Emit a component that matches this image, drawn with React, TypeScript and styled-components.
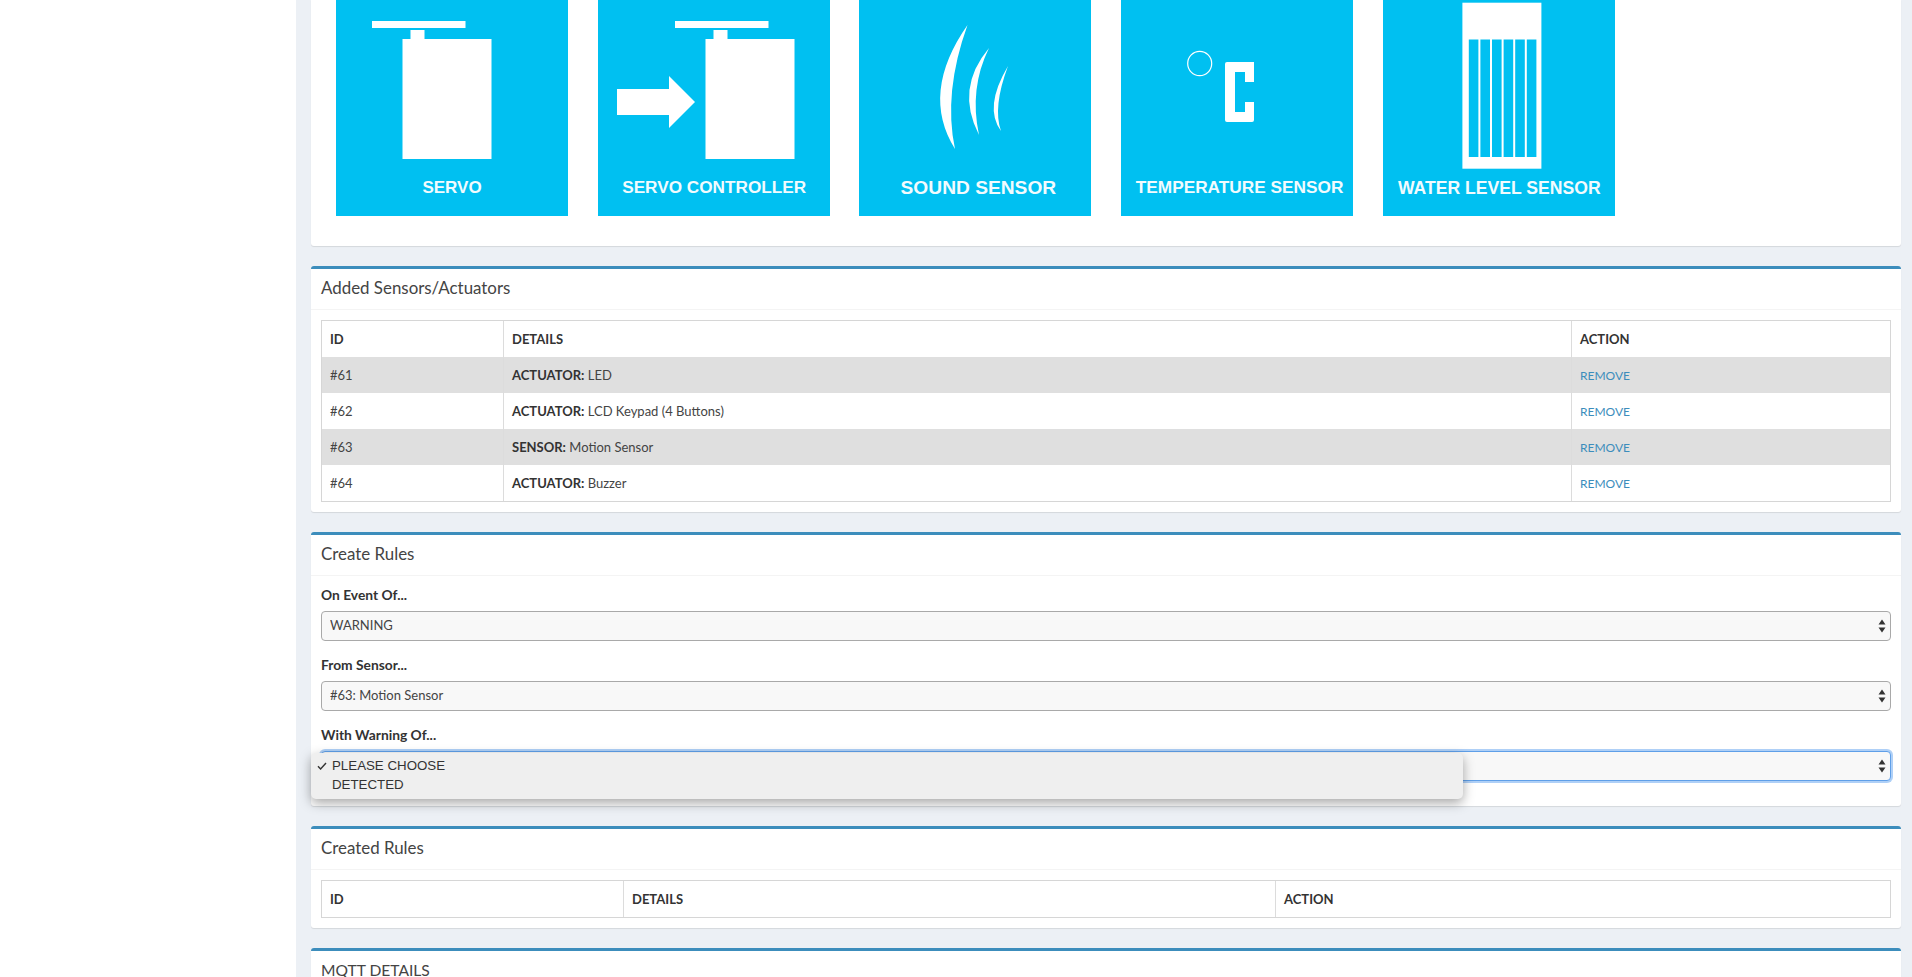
import React from "react";
import styled, { createGlobalStyle } from "styled-components";

const FONT = `Lato, "Noto Sans", sans-serif`;

const GlobalStyle = createGlobalStyle`
  html, body {
    margin: 0;
    height: 977px;
    overflow: hidden;
    background: #fff;
  }
  * {
    box-sizing: border-box;
  }
`;

function ServoBody({ x }: { x: number }) {
  return (
    <>
      <rect x={x} y="21" width="93.5" height="7" />
      <rect x={x + 38.5} y="30" width="14" height="10" />
      <rect x={x + 30.5} y="39" width="89" height="120" />
    </>
  );
}

function ServoArt() {
  return (
    <TileArt viewBox="0 0 232 172">
      <ServoBody x={36} />
    </TileArt>
  );
}

function ServoControllerArt() {
  return (
    <TileArt viewBox="0 0 232 172">
      <ServoBody x={77} />
      <polygon points="19,89 71,89 71,76 97,102 71,128 71,115 19,115" />
    </TileArt>
  );
}

function SoundArt() {
  return (
    <TileArt viewBox="0 0 232 172">
      <path d="M108.5 25 Q61 93 96 149 Q84 93 108.5 25Z" />
      <path d="M130 48 Q96 88.5 120 135 Q110 88.5 130 48Z" />
      <path d="M149 66 Q124.5 107.5 142 131 Q133.5 107.5 149 66Z" />
    </TileArt>
  );
}

function TemperatureArt() {
  return (
    <TileArt viewBox="0 0 232 172">
      <ellipse cx="78.7" cy="63.5" rx="12" ry="12.2" fill="none" stroke="#fff" strokeWidth="1.2" />
      <path d="M106 62 H133 V82 H124 V72 H114 V112 H124 V102 H133 V120 Q133 122 131 122 H106 Q104 122 104 120 V64 Q104 62 106 62Z" />
    </TileArt>
  );
}

function WaterArt() {
  const slots = [0, 1, 2, 3, 4, 5];
  return (
    <TileArt viewBox="0 0 232 172">
      <rect x="79.4" y="2.7" width="79" height="166" />
      {slots.map(i => (
        <rect key={i} x={85.8 + i * 11.6} y="39.5" width="9.6" height="117.5" fill="#00c0f1" />
      ))}
    </TileArt>
  );
}

const TILES = [
  { label: "SERVO", art: <ServoArt />, size: 17, shift: 0, drop: 0 },
  { label: "SERVO CONTROLLER", art: <ServoControllerArt />, size: 17.2, shift: 1, drop: 0 },
  { label: "SOUND SENSOR", art: <SoundArt />, size: 19.2, shift: 6, drop: 0 },
  { label: "TEMPERATURE SENSOR", art: <TemperatureArt />, size: 17.25, shift: 5, drop: 0 },
  { label: "WATER LEVEL SENSOR", art: <WaterArt />, size: 17.6, shift: 1, drop: 1 },
];

const DEVICES = [
  { id: "#61", kind: "ACTUATOR:", name: "LED" },
  { id: "#62", kind: "ACTUATOR:", name: "LCD Keypad (4 Buttons)" },
  { id: "#63", kind: "SENSOR:", name: "Motion Sensor" },
  { id: "#64", kind: "ACTUATOR:", name: "Buzzer" },
];

function SelectArrows() {
  return (
    <ArrowIcon viewBox="0 0 8 14" width="8" height="14">
      <path d="M4 0.5 L7.5 5.5 H0.5Z" />
      <path d="M4 13.5 L0.5 8.5 H7.5Z" />
    </ArrowIcon>
  );
}

interface RuleSelectProps {
  readonly value: string;
  readonly focused?: boolean;
}
function RuleSelect({ value, focused }: RuleSelectProps) {
  return (
    <SelectWrap>
      <Select value={value} $focused={focused} onChange={() => undefined}>
        <option value={value}>{value}</option>
      </Select>
      <SelectArrows />
    </SelectWrap>
  );
}

export default function App() {
  return (
    <Page>
      <GlobalStyle />
      <Sidebar />
      <Content>
        <GalleryBox>
          <TileRow>
            {TILES.map(tile => (
              <Tile key={tile.label}>
                {tile.art}
                <TileLabel $size={tile.size} $shift={tile.shift} $drop={tile.drop}>
                  {tile.label}
                </TileLabel>
              </Tile>
            ))}
          </TileRow>
        </GalleryBox>

        <Box>
          <BoxHeader>Added Sensors/Actuators</BoxHeader>
          <BoxBody>
            <Table>
              <colgroup>
                <col style={{ width: 181 }} />
                <col />
                <col style={{ width: 319 }} />
              </colgroup>
              <thead>
                <tr>
                  <Th>ID</Th>
                  <Th>DETAILS</Th>
                  <Th>ACTION</Th>
                </tr>
              </thead>
              <tbody>
                {DEVICES.map((device, i) => (
                  <Row key={device.id} $striped={i % 2 === 0}>
                    <Td>{device.id}</Td>
                    <Td>
                      <strong>{device.kind}</strong> {device.name}
                    </Td>
                    <Td>
                      <RemoveLink href="#">REMOVE</RemoveLink>
                    </Td>
                  </Row>
                ))}
              </tbody>
            </Table>
          </BoxBody>
        </Box>

        <Box>
          <BoxHeader>Create Rules</BoxHeader>
          <BoxBody>
            <FormGroup>
              <Label>On Event Of...</Label>
              <RuleSelect value="WARNING" />
            </FormGroup>
            <FormGroup>
              <Label>From Sensor...</Label>
              <RuleSelect value="#63: Motion Sensor" />
            </FormGroup>
            <FormGroup>
              <Label>With Warning Of...</Label>
              <RuleSelect value="PLEASE CHOOSE" focused />
              <Menu>
                <MenuItem>
                  <CheckIcon viewBox="0 0 10 8" width="10" height="8">
                    <path d="M1 4.2 L3.6 7 L9 1" />
                  </CheckIcon>
                  PLEASE CHOOSE
                </MenuItem>
                <MenuItem>DETECTED</MenuItem>
              </Menu>
            </FormGroup>
          </BoxBody>
        </Box>

        <Box>
          <BoxHeader>Created Rules</BoxHeader>
          <BoxBody>
            <Table>
              <colgroup>
                <col style={{ width: 301 }} />
                <col style={{ width: 652 }} />
                <col />
              </colgroup>
              <thead>
                <tr>
                  <Th>ID</Th>
                  <Th>DETAILS</Th>
                  <Th>ACTION</Th>
                </tr>
              </thead>
            </Table>
          </BoxBody>
        </Box>

        <Box>
          <CapsHeader>MQTT DETAILS</CapsHeader>
        </Box>
      </Content>
    </Page>
  );
}

const Page = styled.div`
  display: flex;
  height: 977px;
  overflow: hidden;
  font-family: ${FONT};
  font-size: 13px;
  line-height: 20px;
  color: #333;
`;

const Sidebar = styled.div`
  width: 296px;
  flex: none;
  background: #fff;
`;

const Content = styled.div`
  flex: 1;
  min-width: 0;
  padding: 0 11px 0 15px;
  background: #ecf0f5;
`;

const Box = styled.section`
  background: #fff;
  border-top: 3px solid #3c8dbc;
  border-radius: 3px;
  box-shadow: 0 1px 1px rgba(0, 0, 0, 0.1);
  margin-bottom: 20px;
`;

const GalleryBox = styled.section`
  height: 246px;
  margin-bottom: 20px;
  padding-left: 25px;
  background: #fff;
  border-radius: 0 0 3px 3px;
  box-shadow: 0 1px 1px rgba(0, 0, 0, 0.1);
`;

const TileRow = styled.div`
  display: flex;
  gap: 29.7px;
`;

const Tile = styled.div`
  display: flex;
  flex-direction: column;
  width: 232px;
  height: 216px;
  background: #00c0f1;
`;

const TileArt = styled.svg`
  display: block;
  width: 232px;
  height: 172px;
  fill: #fff;
`;

interface TileLabelProps {
  readonly $size: number;
  readonly $shift: number;
  readonly $drop: number;
}
const TileLabel = styled.div<TileLabelProps>`
  height: 32px;
  padding-left: ${({ $shift }) => $shift}px;
  padding-top: ${({ $drop }) => $drop}px;
  font-family: "Liberation Sans", Arial, sans-serif;
  font-weight: 700;
  font-size: ${({ $size }) => $size}px;
  line-height: 31px;
  color: #f2fbfe;
  text-align: center;
  white-space: nowrap;
`;

const BoxHeader = styled.h3`
  margin: 0;
  height: 41px;
  padding: 0 10px;
  border-bottom: 1px solid #f4f4f4;
  font-size: 16.9px;
  font-weight: 400;
  line-height: 38px;
  color: #444;
`;

const CapsHeader = styled(BoxHeader)`
  font-size: 15.6px;
`;

const BoxBody = styled.div`
  padding: 10px;
`;

const Table = styled.table`
  width: 100%;
  table-layout: fixed;
  border-collapse: separate;
  border-spacing: 0;
  border: 1px solid #d6d6d6;
`;

const Th = styled.th`
  height: 36px;
  padding: 0 8px;
  text-align: left;
  font-size: 13px;
  font-weight: 700;
  color: #333;
  & + & {
    border-left: 1px solid #dcdcdc;
  }
`;

interface RowProps {
  readonly $striped: boolean;
}
const Row = styled.tr<RowProps>`
  background: ${({ $striped }) => ($striped ? "#dfdfdf" : "#fff")};
`;

const Td = styled.td`
  height: 36px;
  padding: 0 8px;
  color: #444;
  & + & {
    border-left: 1px solid #dcdcdc;
  }
  strong {
    font-weight: 700;
    color: #333;
  }
`;

const RemoveLink = styled.a`
  font-size: 12px;
  color: #3c8dbc;
  text-decoration: none;
`;

const FormGroup = styled.div`
  position: relative;
  margin-bottom: 15px;
`;

const Label = styled.label`
  display: block;
  height: 20px;
  margin-bottom: 5px;
  font-size: 13.8px;
  font-weight: 700;
  line-height: 18px;
`;

const SelectWrap = styled.div`
  position: relative;
  height: 30px;
`;

interface SelectProps {
  readonly $focused?: boolean;
}
const Select = styled.select<SelectProps>`
  display: block;
  width: 100%;
  height: 30px;
  padding: 0 8px 2px;
  appearance: none;
  background: #f8f8f8;
  border: 1px solid ${({ $focused }) => ($focused ? "#5f9fe8" : "#a9a9a9")};
  border-radius: 4px;
  box-shadow: ${({ $focused }) => ($focused ? "0 0 0 2px rgba(110, 170, 240, 0.55)" : "none")};
  font-family: ${FONT};
  font-size: 13px;
  color: #444;
  outline: none;
`;

const ArrowIcon = styled.svg`
  position: absolute;
  top: 8px;
  right: 5px;
  fill: #333;
`;

const Menu = styled.div`
  position: absolute;
  top: 27px;
  left: -10px;
  width: 1152px;
  height: 46px;
  padding: 3px 0;
  background: #efefef;
  border-radius: 5px;
  box-shadow: 0 4px 12px rgba(0, 0, 0, 0.35);
  font-family: "Liberation Sans", Arial, sans-serif;
  font-size: 13.3px;
  line-height: 19px;
  color: #333;
`;

const MenuItem = styled.div`
  position: relative;
  padding-left: 21px;
`;

const CheckIcon = styled.svg`
  position: absolute;
  top: 6px;
  left: 6px;
  fill: none;
  stroke: #333;
  stroke-width: 1.4;
`;
